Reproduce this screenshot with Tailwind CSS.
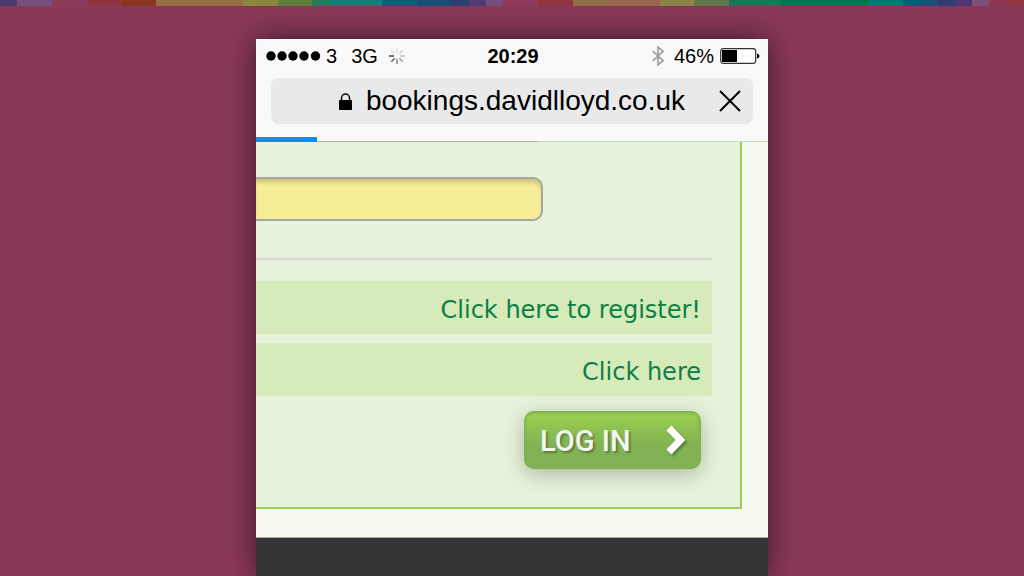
<!DOCTYPE html>
<html lang="en">
<head>
    <meta charset="UTF-8" />
    <meta name="viewport" content="width=device-width, initial-scale=1.0"/>
    <title>bookings.davidlloyd.co.uk</title>
    <script src="https://cdn.jsdelivr.net/npm/@tailwindcss/browser@4"></script>
</head>
<body class="bg-[#8a3859] min-h-screen flex flex-col overflow-hidden font-['Liberation_Sans',Arial,sans-serif] text-black">

<!-- colour strip -->
<div class="flex h-[6px] mb-[33px]">
    <div class="grow-1 bg-[#4d3a6e]"></div>
    <div class="grow-2 bg-[#745081]"></div>
    <div class="grow-2 bg-[#8b3a5a]"></div>
    <div class="grow-2 bg-[#8f353d]"></div>
    <div class="grow-2 bg-[#8a3622]"></div>
    <div class="grow-5 bg-[#976f45]"></div>
    <div class="grow-2 bg-[#8c863f]"></div>
    <div class="grow-2 bg-[#5f7f3c]"></div>
    <div class="grow-1 bg-[#28785a]"></div>
    <div class="grow-3 bg-[#207878]"></div>
    <div class="grow-2 bg-[#145c78]"></div>
    <div class="grow-2 bg-[#1a5078]"></div>
    <div class="grow-1 bg-[#2f3f74]"></div>
    <div class="grow-1 bg-[#503c74]"></div>
    <div class="grow-1 bg-[#745081]"></div>
    <div class="grow-2 bg-[#8f3a58]"></div>
    <div class="grow-2 bg-[#92363f]"></div>
    <div class="grow-2 bg-[#8f704a]"></div>
    <div class="grow-3 bg-[#99684f]"></div>
    <div class="grow-2 bg-[#8b8549]"></div>
    <div class="grow-2 bg-[#617848]"></div>
    <div class="grow-3 bg-[#207558]"></div>
    <div class="grow-5 bg-[#007350]"></div>
    <div class="grow-2 bg-[#007874]"></div>
    <div class="grow-1 bg-[#005f74]"></div>
    <div class="grow-1 bg-[#1e5078]"></div>
    <div class="grow-1 bg-[#2f3f74]"></div>
    <div class="grow-1 bg-[#503570]"></div>
    <div class="grow-1 bg-[#7b4f7a]"></div>
    <div class="grow-1 bg-[#8f3656]"></div>
    <div class="grow-1 bg-[#923640]"></div>
</div>

<div class="w-1/2 mx-auto flex-1 flex flex-col bg-[#f7faf0] shadow-[0_0_28px_rgba(0,0,0,0.6)]">

    <header class="bg-[#f9f9f9]">
        <!-- status bar -->
        <div class="grid grid-cols-[1fr_auto_1fr] items-center h-[33px] pl-[10px] pr-2 text-xl">
            <div class="flex items-center">
                <svg class="w-[55px] h-[10px] mr-[5px]" viewBox="0 0 55 10">
                    <circle cx="5" cy="5" r="4.7"/>
                    <circle cx="16" cy="5" r="4.7"/>
                    <circle cx="27" cy="5" r="4.7"/>
                    <circle cx="38" cy="5" r="4.7"/>
                    <circle cx="49.5" cy="5" r="4.7"/>
                </svg>
                <span class="mr-[14px]">3</span>
                <span class="mr-[11px]">3G</span>
                <svg class="w-4 h-4" viewBox="0 0 16 16" fill="none" stroke-width="1.4">
                    <path d="M8 0v5" stroke="#ddd"/>
                    <path d="M13.7 2.3l-3.4 3.4" stroke="#ccc"/>
                    <path d="M16 8h-5" stroke="#bbb"/>
                    <path d="M13.7 13.7l-3.4-3.4" stroke="#999"/>
                    <path d="M8 16v-5" stroke="#777"/>
                    <path d="M2.3 13.7l3.4-3.4" stroke="#555"/>
                    <path d="M0 8h5" stroke="#333"/>
                    <path d="M2.3 2.3l3.4 3.4" stroke="#ddd"/>
                </svg>
            </div>
            <span class="font-bold">20:29</span>
            <div class="flex items-center justify-end">
                <svg class="w-3 h-5 mr-[10px]" viewBox="0 0 12 20" fill="none" stroke="#a0a0a0" stroke-width="1.7">
                    <path d="M0.8 5.2L11 14.6L6 19V1L11 5.4L0.8 14.8"/>
                </svg>
                <span class="mr-[6px]">46%</span>
                <svg class="w-10 h-4" viewBox="0 0 40 16">
                    <rect x="0.7" y="0.7" width="35" height="14.6" rx="2.5" fill="#fff" stroke="#333" stroke-width="1.2"/>
                    <rect x="2" y="2" width="15" height="12"/>
                    <path d="M37 5.5q2.5 0.5 2.5 2.5t-2.5 2.5z"/>
                </svg>
            </div>
        </div>

        <!-- address bar -->
        <div class="flex items-center h-[46px] mx-[15px] mt-[6px] pr-[12px] rounded-lg bg-[#e8e9eb]">
            <div class="flex-1 flex items-center justify-end mr-[34px]">
                <svg class="w-[13px] h-[17px] mr-[14px]" viewBox="0 0 13 17">
                    <rect x="0" y="7" width="13" height="10" rx="0.8"/>
                    <path d="M2.5 8V5a4 4 0 0 1 8 0v3" fill="none" stroke="#000" stroke-width="1.5"/>
                </svg>
                <span class="text-[28px] leading-8">bookings.davidlloyd.co.uk</span>
            </div>
            <button type="button" aria-label="Stop loading">
                <svg class="w-[22px] h-[22px]" viewBox="0 0 22 22" stroke="#000" stroke-width="2">
                    <path d="M1 1l20 20M21 1L1 21"/>
                </svg>
            </button>
        </div>

        <!-- load progress -->
        <div class="mt-[13px] h-[5px] flex items-end">
            <div class="w-[12%] h-[5px] bg-[#0b8ff5]"></div>
            <div class="w-[43%] h-px bg-[#b4b6ae]"></div>
            <div class="flex-1 h-px bg-[#cdd2c8]"></div>
        </div>
    </header>

    <main class="mr-[26px] pt-[35px] pr-7 pb-[38px] bg-[#e6f2d9] border-r-2 border-b-2 border-[#9ccf54]">
        <form>
            <input type="password" aria-label="Password"
                   class="block w-[63%] h-11 px-3 text-xl rounded-r-[10px] border-2 border-l-0 border-[#a6a6a4] bg-[#f8ed97] shadow-[inset_0_5px_5px_-2px_rgba(0,0,0,0.2)]"/>
            <hr class="mt-[37px] mb-[21px] border-t-2 border-[#d5d5d3]"/>
            <div class="h-[53px] mb-[9px] pt-1 pr-[11px] flex items-center justify-end bg-[#d7eab9] text-[#0a8048] text-2xl font-['DejaVu_Sans',Verdana,sans-serif]">
                <a href="#">Click here to register!</a>
            </div>
            <div class="h-[53px] mb-[15px] pt-1 pr-[11px] flex items-center justify-end bg-[#d7eab9] text-[#0a8048] text-2xl font-['DejaVu_Sans',Verdana,sans-serif]">
                <a href="#">Click here</a>
            </div>
            <button type="submit"
                    class="flex items-center justify-between w-[177px] h-[58px] ml-auto mr-[11px] pl-4 pr-[14px] rounded-[10px] bg-linear-to-b from-[#99cc50] from-10% to-[#82b254] to-60% text-[#f4f7f0] text-[29px] font-medium font-['Roboto',sans-serif] text-shadow-[2px_2px_2px_rgba(0,0,0,0.3)] shadow-[0_5px_20px_rgba(0,0,0,0.25),inset_0_0_3px_2px_#7db34c]">
                <span class="pt-1">LOG IN</span>
                <svg class="w-[22px] h-8 drop-shadow-[2px_2px_1px_rgba(0,0,0,0.3)]" viewBox="0 0 22 32" fill="none" stroke="#fff" stroke-width="7">
                    <path d="M4 4L15.5 16L4 28"/>
                </svg>
            </button>
        </form>
    </main>

    <footer class="mt-7 flex-1 bg-[#353335] border-t border-[#a5a9a1]"></footer>
</div>

</body>
</html>
